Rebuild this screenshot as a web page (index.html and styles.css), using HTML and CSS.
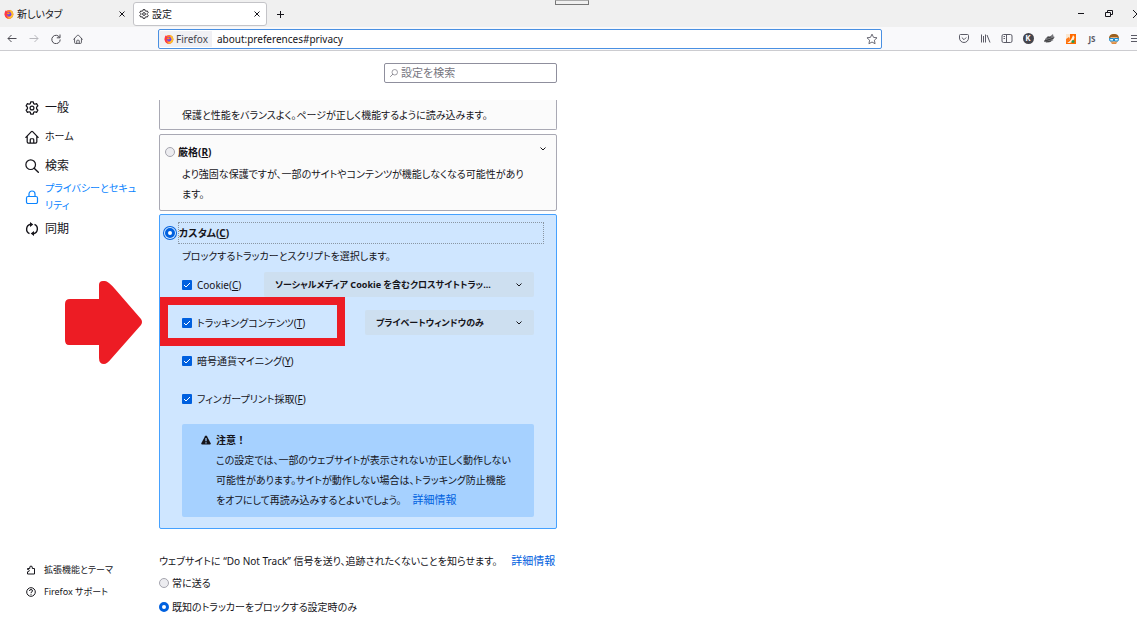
FILE: index.html
```html
<!DOCTYPE html>
<html lang="ja">
<head>
<meta charset="utf-8">
<title>設定</title>
<link rel="stylesheet" href="styles.css">
</head>
<body>
<svg class="defs" aria-hidden="true">
  <defs>
    <symbol id="firefox" viewBox="0 0 16 16">
      <circle cx="8" cy="8.500" r="7" fill="#ff7139"/>
      <path d="M15 8.500A7 7 0 0 1 3 13.500C8 15 12 11 10 6.500L10 1C12.500 2 15 5 15 8.500z" fill="#ffbd2e"/>
      <path d="M1 8C1 5 2 3.500 3 2l1.500 2.500L8 5 6 8l-2 3c1 3 4 4 6.500 3.500C6 17 1 14 1 8z" fill="#ff3647"/>
      <circle cx="8.300" cy="8.300" r="3.500" fill="#7542e5"/>
      <path d="M4.500 6.500c2-1.500 4-1 5 .5L7.500 8.500c-1 .5-2.500 0-3-2z" fill="#ff980e"/>
    </symbol>
    <symbol id="gear" viewBox="0 0 16 16">
      <path d="M6.500 1h3l.4 2 1.300.7 2-.7 1.500 2.600-1.500 1.500v1.800l1.500 1.500-1.500 2.600-2-.7-1.300.7-.4 2h-3l-.4-2-1.300-.7-2 .7-1.500-2.600 1.500-1.500V7.100L1.300 5.600 2.800 3l2 .7L6.100 3z" fill="none" stroke="currentColor" stroke-width="1.400" stroke-linejoin="round"/>
      <circle cx="8" cy="8" r="2.200" fill="none" stroke="currentColor" stroke-width="1.400"/>
    </symbol>
    <symbol id="home" viewBox="0 0 16 16">
      <path d="M1 8.500L7.300 1.800q.7-.7 1.400 0L15 8.500M2.500 7v6.500q0 1.500 1.500 1.500h8q1.500 0 1.500-1.500V7M6 15v-4q0-1 1-1h2q1 0 1 1v4" fill="none" stroke="currentColor" stroke-width="1.400" stroke-linecap="round" stroke-linejoin="round"/>
    </symbol>
    <symbol id="close" viewBox="0 0 16 16">
      <path d="M3 3l10 10M13 3L3 13" fill="none" stroke="currentColor" stroke-width="2"/>
    </symbol>
    <symbol id="search" viewBox="0 0 16 16">
      <circle cx="6.500" cy="6.500" r="5.500" fill="none" stroke="currentColor" stroke-width="1.400"/>
      <path d="M10.500 10.500L15.200 15.200" stroke="currentColor" stroke-width="1.600" stroke-linecap="round"/>
    </symbol>
  </defs>
</svg>

<header class="tabbar">
  <div class="tab">
    <svg class="icon-10"><use href="#firefox"/></svg>
    <span class="tab-title">新しいタブ</span>
    <button class="plain" aria-label="タブを閉じる"><svg class="icon-8"><use href="#close"/></svg></button>
  </div>
  <div class="tab tab-active">
    <svg class="icon-10"><use href="#gear"/></svg>
    <span class="tab-title">設定</span>
    <button class="plain" aria-label="タブを閉じる"><svg class="icon-8"><use href="#close"/></svg></button>
  </div>
  <button class="plain new-tab" aria-label="新しいタブを開く"><svg class="icon-10" viewBox="0 0 10 10"><path d="M5.500 2v7M2 5.500h7" stroke="currentColor"/></svg></button>
  <div class="window-handle"></div>
  <div class="window-controls">
    <button class="plain" aria-label="最小化"><svg class="icon-8" viewBox="0 0 8 8"><path d="M1 3.500h6" stroke="currentColor"/></svg></button>
    <button class="plain" aria-label="元に戻す"><svg class="icon-8" viewBox="0 0 8 8"><path d="M.5 2.500h5v4h-5zM2.500 2.500v-2h5v4h-2" fill="none" stroke="currentColor"/></svg></button>
    <button class="plain" aria-label="閉じる"><svg class="icon-8" viewBox="0 0 8 8"><path d="M0 0l8 8M8 0L0 8" stroke="currentColor"/></svg></button>
  </div>
</header>

<div class="toolbar">
  <div class="nav-buttons">
    <button class="plain" aria-label="戻る"><svg class="icon-10" viewBox="0 0 10 10"><path d="M9.500 4.500H1M4.500 1L1 4.500 4.500 8" fill="none" stroke="currentColor"/></svg></button>
    <button class="plain faded" aria-label="進む"><svg class="icon-10" viewBox="0 0 10 10"><path d="M.5 4.500H9M5.500 1L9 4.500 5.500 8" fill="none" stroke="currentColor"/></svg></button>
    <button class="plain" aria-label="再読み込み"><svg class="icon-10" viewBox="0 0 10 10"><path d="M8.700 3.500A4.200 4.200 0 1 0 9.200 5.500M9 .5v3.300H5.800" fill="none" stroke="currentColor"/></svg></button>
    <button class="plain" aria-label="ホーム"><svg class="icon-10"><use href="#home"/></svg></button>
  </div>
  <div class="urlbar">
    <span class="identity"><svg class="icon-10"><use href="#firefox"/></svg>Firefox</span>
    <input class="url" type="text" aria-label="アドレス" value="about:preferences#privacy">
    <button class="plain star" aria-label="ブックマーク"><svg class="icon-12" viewBox="0 0 16 16"><path d="M8 1.500l2 4.300 4.700.6-3.500 3.200.9 4.700L8 12l-4.100 2.300.9-4.700L1.300 6.400 6 5.800z" fill="none" stroke="currentColor" stroke-width="1.200" stroke-linejoin="round"/></svg></button>
  </div>
  <div class="extensions">
    <button class="plain" aria-label="Pocket"><svg class="icon-12" viewBox="0 0 12 12"><path d="M2.500 1.500h7q1 0 1 1V5a4.500 4.500 0 0 1-9 0V2.500q0-1 1-1zM3.800 4.500L6 6.700l2.200-2.200" fill="none" stroke="currentColor"/></svg></button>
    <button class="plain" aria-label="ライブラリー"><svg class="icon-12" viewBox="0 0 12 12"><path d="M1.500 1.500v8M3.500 3v6.500M5.500 1.500v8M7 2l3 7.500" stroke="currentColor"/></svg></button>
    <button class="plain" aria-label="サイドバー"><svg class="icon-12" viewBox="0 0 12 12"><path d="M2.500 1.500h7q1.500 0 1.500 1.500v5q0 1.500-1.500 1.500h-7Q1 9.500 1 8V3q0-1.500 1.500-1.500zM5.500 1.500v8M2.500 3.500H4M2.500 5.500H4" fill="none" stroke="currentColor"/></svg></button>
    <button class="plain badge-k">K</button>
    <button class="plain" aria-label="拡張機能"><svg class="icon-12" viewBox="0 0 12 12"><path d="M2 6l3-3 2 .5L10 1l.5 2.500L12 4 9.500 6l1 1L8 8.500 6 9.500 1 9l1-1.500z" fill="#77777c"/><path d="M1 8l4-1 6-2M4 5l4-1M3 9l5-1" stroke="#333" stroke-width=".8"/></svg></button>
    <button class="plain" aria-label="キツネ"><svg class="icon-12" viewBox="0 0 12 12"><path d="M5 1h6v10H1V8z" fill="#ff6a00"/><path d="M1 1h4v5L1 9z" fill="#fbe7d0"/><path d="M2 10Q7 7 8 2l1.500 2Q9 8 5 10z" fill="#fff0d8"/><path d="M1 6l3-2 1 2-4 4z" fill="#ff7a1a"/><circle cx="8" cy="8.500" r="1.500" fill="#299b51"/></svg></button>
    <button class="plain js">JS</button>
    <button class="plain" aria-label="アバター"><svg class="icon-12" viewBox="0 0 12 12"><circle cx="6" cy="6" r="4.500" fill="#e9b07d"/><path d="M1 6C1 2 3 1 6 1s5 1 5 5L9 4H3z" fill="#9b601e"/><path d="M1.500 5.500h4v2.500H2zM6.500 5.500h4L10 8H6.500z" fill="#dff5ff" stroke="#168bd2"/><path d="M3 9.500h6L8 11H4z" fill="#e08a3c"/></svg></button>
    <button class="plain" aria-label="メニュー"><svg class="icon-12" viewBox="0 0 12 12"><path d="M2 2.500h10M2 5.500h10M2 8.500h10" stroke="currentColor"/></svg></button>
  </div>
</div>

<div class="page">
  <nav class="sidebar">
    <a class="category" href="#general"><svg class="icon-14"><use href="#gear"/></svg>一般</a>
    <a class="category category-kana" href="#home-page"><svg class="icon-14"><use href="#home"/></svg>ホーム</a>
    <a class="category" href="#find"><svg class="icon-14"><use href="#search"/></svg>検索</a>
    <a class="category category-kana category-selected" href="#privacy"><svg class="icon-14" viewBox="0 0 14 14"><path d="M3 6.500h8q1.500 0 1.500 1.500v4q0 1.500-1.500 1.500H3Q1.500 13.500 1.500 12V8Q1.500 6.500 3 6.500zM4 6.500V4a3 3 0 0 1 6 0v2.500" fill="none" stroke="currentColor" stroke-width="1.200"/></svg><span>プライバシーとセキュ<br>リティ</span></a>
    <a class="category" href="#sync"><svg class="icon-14" viewBox="0 0 14 14"><path d="M4.500 11.700A5 5 0 0 1 5.500 2.300M9.500 2.300a5 5 0 0 1-1 9.400" fill="none" stroke="currentColor" stroke-width="1.400"/><path d="M5 0l3.300 2.500L5 5zM9 9l-3.300 2.500L9 14z" fill="currentColor"/></svg>同期</a>
    <div class="sidebar-footer">
      <a class="footer-link" href="#addons"><svg class="icon-10" viewBox="0 0 10 10"><path d="M1.500 9V6.800q1.800 0 1.800-1.200T1.500 4.500V3.500h2.300Q3.300 1 5 1t1.300 2.500h2.200V9z" fill="none" stroke="currentColor"/></svg>拡張機能とテーマ</a>
      <a class="footer-link" href="#support"><svg class="icon-10" viewBox="0 0 10 10"><circle cx="5" cy="5" r="4.300" fill="none" stroke="currentColor"/><path d="M3.500 4q0-1.500 1.500-1.500T6.500 4Q6.500 4.700 5 5.500V6M5 6.800V7.800" fill="none" stroke="currentColor"/></svg>Firefox サポート</a>
    </div>
  </nav>

  <main class="content">
    <label class="search">
      <svg class="icon-8 search-icon"><use href="#search"/></svg>
      <input class="search-input" type="search" placeholder="設定を検索" aria-label="設定を検索">
    </label>

    <section class="card card-cut">
      <p class="text">保護と性能をバランスよく。ページが正しく機能するように読み込みます。</p>
    </section>

    <section class="card">
      <div class="card-head">
        <input class="radio" type="radio" name="level" id="strict">
        <label class="card-title" for="strict">厳格(<u>R</u>)</label>
        <button class="plain expand" aria-label="展開"><svg class="icon-8" viewBox="0 0 8 8"><path d="M1.500 2.500L4 5l2.500-2.500" fill="none" stroke="currentColor"/></svg></button>
      </div>
      <p class="text">より強固な保護ですが、一部のサイトやコンテンツが機能しなくなる可能性があり<br>ます。</p>
    </section>

    <section class="card card-selected">
      <div class="card-head">
        <input class="radio radio-focus" type="radio" name="level" id="custom" checked>
        <label class="card-title card-title-focus" for="custom">カスタム(<u>C</u>)</label>
      </div>
      <p class="text">ブロックするトラッカーとスクリプトを選択します。</p>
      <div class="options">
        <div class="option">
          <input class="check" type="checkbox" id="cookie" checked>
          <label for="cookie">Cookie(<u>C</u>)</label>
          <select class="select select-wide" aria-label="Cookie のブロック対象"><option>ソーシャルメディア Cookie を含むクロスサイトトラッ...</option></select>
        </div>
        <div class="option">
          <input class="check" type="checkbox" id="tracking" checked>
          <label for="tracking">トラッキングコンテンツ(<u>T</u>)</label>
          <select class="select" aria-label="トラッキングのブロック対象"><option>プライベートウィンドウのみ</option></select>
        </div>
        <div class="option">
          <input class="check" type="checkbox" id="mining" checked>
          <label for="mining">暗号通貨マイニング(<u>Y</u>)</label>
        </div>
        <div class="option">
          <input class="check" type="checkbox" id="finger" checked>
          <label for="finger">フィンガープリント採取(<u>F</u>)</label>
        </div>
      </div>
      <div class="warning">
        <svg class="icon-10 warning-icon" viewBox="0 0 10 10"><path d="M5 .5q.6 0 1 .7l3.700 7q.4 1.300-.9 1.300H1.200Q-.1 9.500.3 8.200l3.700-7Q4.400.5 5 .5z" fill="#15141a"/><path d="M5 3v3.300M5 7.200v1.200" stroke="#a6d1ff" stroke-width="1.200"/></svg>
        <div>
          <strong class="warning-title">注意！</strong>
          <p>この設定では、一部のウェブサイトが表示されないか正しく動作しない<br>可能性があります。サイトが動作しない場合は、トラッキング防止機能<br>をオフにして再読み込みするとよいでしょう。<a class="link" href="#more">詳細情報</a></p>
        </div>
      </div>
      <div class="highlight"></div>
      <svg class="arrow" viewBox="0 0 77 84"><path d="M5 19H34V5Q34 1 38 1h2Q43 1 50 9L76 39q2 3 0 6L46 79q-4 5-7 5-5 0-5-6V65H4q-4 0-4-5V24q0-5 5-5z" fill="#ed1c24"/></svg>
    </section>

    <section class="dnt">
      <p class="dnt-text">ウェブサイトに “Do Not Track” 信号を送り、追跡されたくないことを知らせます。<a class="link" href="#dnt-more">詳細情報</a></p>
      <div class="dnt-option"><input class="radio" type="radio" name="dnt" id="always"><label for="always">常に送る</label></div>
      <div class="dnt-option"><input class="radio" type="radio" name="dnt" id="known" checked><label for="known">既知のトラッカーをブロックする設定時のみ</label></div>
    </section>
  </main>
</div>
</body>
</html>
```

FILE: styles.css
```css
* { box-sizing: border-box; }

body {
  margin: 0;
  height: 100vh;
  display: flex;
  flex-direction: column;
  overflow: hidden;
  background: #fff;
  color: #15141a;
  font: 10px/20px "Noto Sans", "Noto Sans CJK JP", sans-serif;
  font-feature-settings: "palt";
}

p { margin: 0; }
a { color: inherit; text-decoration: none; }
input, select, button { font: inherit; color: inherit; font-feature-settings: inherit; }
svg { display: block; flex: none; }
u { text-underline-offset: 1px; }

.defs { position: absolute; width: 0; height: 0; }
.icon-8 { width: 8px; height: 8px; }
.icon-10 { width: 10px; height: 10px; }
.icon-12 { width: 12px; height: 12px; }
.icon-14 { width: 14px; height: 14px; }

.plain {
  display: flex;
  align-items: center;
  justify-content: center;
  margin: 0;
  padding: 0;
  border: 0;
  background: none;
}

.tabbar {
  position: relative;
  flex: none;
  display: flex;
  align-items: center;
  height: 27px;
  background: #f0f0f0;
  overflow: hidden;
}
.tab {
  display: flex;
  align-items: center;
  gap: 3px;
  width: 133px;
  height: 24px;
  padding: 0 7px 0 4px;
  white-space: nowrap;
}
.tab-active {
  width: 134px;
  padding: 0 5px;
  background: #fff;
  border: 1px solid #c4c4c8;
  border-radius: 3px;
}
.tab-title { flex: 1; }
.new-tab { margin-left: 8px; }
.window-handle {
  position: absolute;
  top: 0;
  left: 50%;
  width: 34px;
  height: 5px;
  margin-left: -14px;
  border: 1px solid #777;
  border-top-color: #aaa;
}
.window-controls {
  display: flex;
  gap: 20px;
  margin-left: auto;
  margin-right: -4px;
}

.toolbar {
  flex: none;
  display: flex;
  align-items: center;
  height: 24px;
  background: #f9f9fb;
  border-bottom: 1px solid #ccccd0;
  overflow: hidden;
}
.nav-buttons {
  display: flex;
  gap: 12px;
  width: 158px;
  padding-left: 7px;
  color: #4c4b53;
}
.faded { color: #b8b8bd; }
.urlbar {
  flex: 1;
  display: flex;
  align-items: center;
  height: 20px;
  padding: 1px 3px 1px 0;
  background: #fff;
  border: 1px solid #4a90e2;
  border-radius: 2px;
}
.identity {
  display: flex;
  align-items: center;
  gap: 2px;
  height: 16px;
  padding: 0 4px 0 5px;
  background: #f0f0f4;
  color: #45444d;
}
.url {
  flex: 1;
  min-width: 0;
  height: 16px;
  padding: 0 5px;
  border: 0;
  outline: 0;
  background: none;
}
.star { color: #5b5b66; }
.extensions {
  display: flex;
  justify-content: space-between;
  width: 183px;
  margin: 0 -4px 0 76px;
  color: #5b5b66;
}
.badge-k, .js {
  width: 12px;
  height: 12px;
  font-size: 8px;
  font-weight: 700;
  line-height: 12px;
}
.badge-k {
  width: 11px;
  height: 11px;
  border-radius: 50%;
  background: #45454d;
  color: #fff;
}

.page {
  flex: 1;
  min-height: 0;
  display: grid;
  grid-template-columns: 159px minmax(0, 398px);
}

.sidebar {
  display: flex;
  flex-direction: column;
  padding: 42px 20px 18px 25px;
}
.category {
  display: flex;
  align-items: center;
  gap: 6px;
  height: 29px;
  font-size: 12px;
  line-height: 17px;
  white-space: nowrap;
}
.category-kana { font-size: 10px; }
.category-selected { height: 34px; color: #0a84ff; }
.sidebar-footer { margin-top: auto; }
.footer-link {
  display: flex;
  align-items: center;
  gap: 8px;
  height: 22px;
  padding-left: 1px;
  font-size: 9px;
  white-space: nowrap;
}

.content { padding-top: 12px; white-space: nowrap; }
.search {
  display: flex;
  align-items: center;
  gap: 3px;
  width: 173px;
  height: 20px;
  margin: 0 0 17px auto;
  padding: 0 5px;
  border: 1px solid #8f8f9d;
  border-radius: 2px;
}
.search-icon { color: #77767f; transform: scaleX(-1); }
.search-input {
  flex: 1;
  min-width: 0;
  height: 16px;
  padding: 0;
  border: 0;
  outline: 0;
  appearance: none;
  background: none;
  font-size: 11px;
}
.search-input::placeholder { color: #77767f; }

.card {
  position: relative;
  margin-bottom: 3px;
  padding: 7px 9px 6px 5px;
  border: 1px solid #a9a9b4;
  border-radius: 2px;
  background: #fbfbfb;
}
.card-cut {
  margin-bottom: 4px;
  padding-top: 5px;
  padding-bottom: 4px;
  border-top: 0;
  border-radius: 0 0 2px 2px;
}
.card-selected {
  padding-right: 12px;
  padding-bottom: 11px;
  border-color: #45a1ff;
  background: #cfe6ff;
}
.card-head {
  display: flex;
  align-items: center;
  gap: 3px;
  margin-bottom: 2px;
}
.card-title { flex: 1; font-weight: 700; }
.card-title-focus { border: 1px dotted #8a96a3; }
.expand { align-self: flex-start; padding: 3px 0; }
.text { padding-left: 17px; }

.radio {
  appearance: none;
  flex: none;
  width: 10px;
  height: 10px;
  margin: 0;
  border: 1px solid #a5a5ae;
  border-radius: 50%;
  background: #ececf0;
}
.radio:checked { border: 3px solid #0060df; background: #fff; }
.radio-focus { box-shadow: 0 0 0 1px #cfe6ff, 0 0 0 2px #0060df; }

.options {
  display: grid;
  gap: 13px;
  margin: 6px 10px 13px 17px;
}
.option { display: flex; align-items: center; gap: 5px; height: 25px; }
.check {
  appearance: none;
  flex: none;
  width: 10px;
  height: 10px;
  margin: 0;
  border-radius: 1px;
  background: #0060df url("data:image/svg+xml,%3Csvg xmlns='http://www.w3.org/2000/svg' viewBox='0 0 10 10'%3E%3Cpath d='M2 5l2 2 4-4' fill='none' stroke='white'/%3E%3C/svg%3E");
}
.select {
  appearance: none;
  width: 169px;
  height: 25px;
  margin-left: auto;
  padding: 0 24px 0 11px;
  border: 0;
  border-radius: 2px;
  background: #cddff0 url("data:image/svg+xml,%3Csvg xmlns='http://www.w3.org/2000/svg' viewBox='0 0 8 8'%3E%3Cpath d='M1.500 2.500L4 5l2.500-2.500' fill='none' stroke='%2315141a'/%3E%3C/svg%3E") no-repeat right 11px center / 8px 8px;
  font-size: 9px;
  font-weight: 700;
}
.select-wide { width: 270px; }

.warning {
  display: flex;
  gap: 5px;
  margin: 0 10px 0 17px;
  padding: 6px 0 7px 19px;
  border-radius: 2px;
  background: #a6d1ff;
}
.warning-title { display: block; font-feature-settings: normal; }
.warning-icon { margin-top: 5px; }
.link { margin-left: 11px; color: #0061e0; font-size: 11px; }

.highlight {
  position: absolute;
  top: 82px;
  left: 0;
  width: 185px;
  height: 49px;
  border: 8px solid #ed1c24;
  pointer-events: none;
}
.arrow {
  position: absolute;
  top: 65px;
  left: -95px;
  width: 77px;
  height: 84px;
}

.dnt { margin-top: 22px; }
.dnt .link { margin-left: 14px; }
.dnt-option {
  display: flex;
  align-items: center;
  gap: 3px;
  margin-bottom: 4px;
}
.dnt-text { margin-bottom: 2px; }
```
